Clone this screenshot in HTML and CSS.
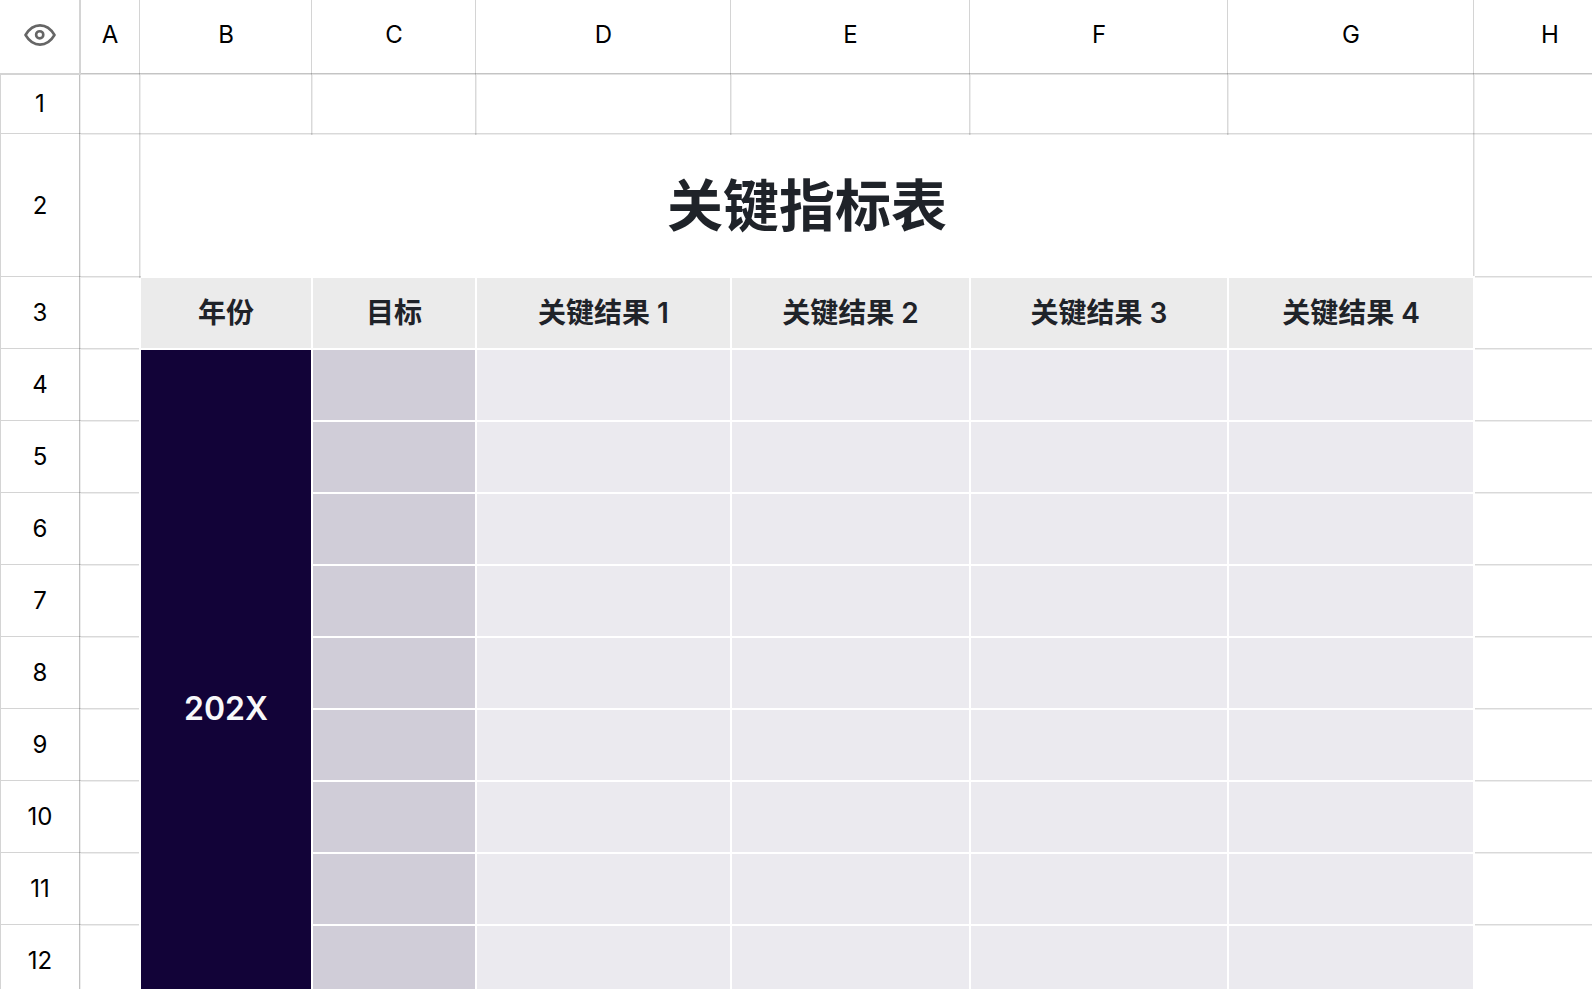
FILE: index.html
```html
<!DOCTYPE html>
<html lang="zh-CN">
<head>
    <meta charset="UTF-8">
    <meta name="viewport" content="width=device-width, initial-scale=1.0">
    <title>关键指标表</title>
    <link rel="stylesheet" href="styles.css">
</head>
<body>
    <div class="sheet">
        <table class="grid">
            <colgroup>
                <col class="col-index">
                <col class="col-a">
                <col class="col-b">
                <col class="col-c">
                <col class="col-d">
                <col class="col-e">
                <col class="col-f">
                <col class="col-g">
                <col class="col-h">
            </colgroup>
            <thead>
                <tr class="letters">
                    <th class="corner">
                        <button type="button" class="view-button" aria-label="视图">
                            <svg class="eye" viewBox="0 0 32 22" width="32" height="22" fill="none" stroke="currentColor" stroke-width="2.6" stroke-linejoin="round">
                                <path d="M1.5 11C5.2 4.8 10.2 1.4 16 1.4S26.8 4.8 30.5 11C26.8 17.2 21.8 20.6 16 20.6S5.2 17.2 1.5 11Z"/>
                                <circle cx="15.7" cy="10.8" r="3.6"/>
                            </svg>
                        </button>
                    </th>
                    <th scope="col">A</th>
                    <th scope="col">B</th>
                    <th scope="col">C</th>
                    <th scope="col">D</th>
                    <th scope="col">E</th>
                    <th scope="col">F</th>
                    <th scope="col">G</th>
                    <th scope="col">H</th>
                </tr>
            </thead>
            <tbody>
                <tr class="row-blank">
                    <th class="index" scope="row">1</th>
                    <td></td><td></td><td></td><td></td><td></td><td></td><td></td><td></td>
                </tr>
                <tr class="row-title">
                    <th class="index" scope="row">2</th>
                    <td></td>
                    <td class="title" colspan="6">关键指标表</td>
                    <td></td>
                </tr>
                <tr>
                    <th class="index" scope="row">3</th>
                    <td class="edge"></td>
                    <td class="heading">年份</td>
                    <td class="heading">目标</td>
                    <td class="heading">关键结果 1</td>
                    <td class="heading">关键结果 2</td>
                    <td class="heading">关键结果 3</td>
                    <td class="heading">关键结果 4</td>
                    <td></td>
                </tr>
                <tr>
                    <th class="index" scope="row">4</th>
                    <td class="edge"></td>
                    <td class="year" rowspan="10">202X</td>
                    <td class="goal"></td>
                    <td class="result"></td><td class="result"></td><td class="result"></td><td class="result"></td>
                    <td></td>
                </tr>
                <tr>
                    <th class="index" scope="row">5</th>
                    <td class="edge"></td>
                    <td class="goal"></td>
                    <td class="result"></td><td class="result"></td><td class="result"></td><td class="result"></td>
                    <td></td>
                </tr>
                <tr>
                    <th class="index" scope="row">6</th>
                    <td class="edge"></td>
                    <td class="goal"></td>
                    <td class="result"></td><td class="result"></td><td class="result"></td><td class="result"></td>
                    <td></td>
                </tr>
                <tr>
                    <th class="index" scope="row">7</th>
                    <td class="edge"></td>
                    <td class="goal"></td>
                    <td class="result"></td><td class="result"></td><td class="result"></td><td class="result"></td>
                    <td></td>
                </tr>
                <tr>
                    <th class="index" scope="row">8</th>
                    <td class="edge"></td>
                    <td class="goal"></td>
                    <td class="result"></td><td class="result"></td><td class="result"></td><td class="result"></td>
                    <td></td>
                </tr>
                <tr>
                    <th class="index" scope="row">9</th>
                    <td class="edge"></td>
                    <td class="goal"></td>
                    <td class="result"></td><td class="result"></td><td class="result"></td><td class="result"></td>
                    <td></td>
                </tr>
                <tr>
                    <th class="index" scope="row">10</th>
                    <td class="edge"></td>
                    <td class="goal"></td>
                    <td class="result"></td><td class="result"></td><td class="result"></td><td class="result"></td>
                    <td></td>
                </tr>
                <tr>
                    <th class="index" scope="row">11</th>
                    <td class="edge"></td>
                    <td class="goal"></td>
                    <td class="result"></td><td class="result"></td><td class="result"></td><td class="result"></td>
                    <td></td>
                </tr>
                <tr>
                    <th class="index" scope="row">12</th>
                    <td class="edge"></td>
                    <td class="goal"></td>
                    <td class="result"></td><td class="result"></td><td class="result"></td><td class="result"></td>
                    <td></td>
                </tr>
                <tr>
                    <th class="index" scope="row"></th>
                    <td class="edge"></td>
                    <td class="goal"></td>
                    <td class="result"></td><td class="result"></td><td class="result"></td><td class="result"></td>
                    <td></td>
                </tr>
            </tbody>
        </table>
    </div>
</body>
</html>
```
FILE: styles.css
```css
:root {
    --line-right: linear-gradient(to right, rgba(0, 0, 0, 0.15) 1px, rgba(0, 0, 0, 0.07) 1px) right / 2px 100% no-repeat;
    --line-bottom: linear-gradient(to bottom, rgba(0, 0, 0, 0.15) 1px, rgba(0, 0, 0, 0.07) 1px) bottom / 100% 2px no-repeat;
}

* {
    box-sizing: border-box;
}

body {
    margin: 0;
    background-color: #fff;
    color: #000;
    font-family: Inter, "Noto Sans CJK SC", sans-serif;
    font-size: 24px;
    line-height: 32px;
}

/* Scrolling viewport around the grid */
.sheet {
    height: 100vh;
    overflow: auto;
    scrollbar-width: none;
}

.grid {
    width: max-content;
    table-layout: fixed;
    border-collapse: separate;
    border-spacing: 0;
}

.col-index { width: 81px; }
.col-a { width: 60px; }
.col-b { width: 172px; }
.col-c { width: 164px; }
.col-d { width: 255px; }
.col-e { width: 239px; }
.col-f { width: 258px; }
.col-g { width: 246px; }
.col-h { width: 152px; }

th,
td {
    height: 72px;
    padding: 0 2px 2px 0;
    text-align: center;
    vertical-align: middle;
    font-weight: 400;
}

td {
    background: var(--line-right), var(--line-bottom);
}

/* Column letters */
.letters th {
    height: 75px;
    padding-bottom: 6px;
    background:
        linear-gradient(to right, rgba(0, 0, 0, 0.17) 1px, transparent 1px) right / 2px 100% no-repeat,
        linear-gradient(to bottom, rgba(0, 0, 0, 0.23) 1px, rgba(0, 0, 0, 0.11) 1px) bottom / 100% 2px no-repeat;
}

.letters .corner {
    padding: 0 0 4px;
    border-right: 2px solid #d4d4d4;
    border-bottom: 2px solid #d4d4d4;
    background: none;
}

.view-button {
    display: block;
    margin: 0 auto;
    padding: 0;
    border: 0;
    background: none;
    color: #666;
    cursor: pointer;
}

.eye {
    display: block;
}

/* Row numbers */
.index {
    border-left: 1px solid #d4d4d4;
    background:
        linear-gradient(to right, rgba(0, 0, 0, 0.24) 1px, rgba(0, 0, 0, 0.07) 1px) right / 2px 100% no-repeat,
        linear-gradient(to bottom, rgba(0, 0, 0, 0.17) 1px, transparent 1px) bottom / 100% 2px no-repeat;
}

.row-blank th,
.row-blank td {
    height: 60px;
}

.row-title th,
.row-title td {
    height: 143px;
}

/* Table content */
.edge {
    border-right: 2px solid #fff;
    background: var(--line-bottom);
}

.title,
.heading,
.year,
.goal,
.result {
    padding: 0;
    border-right: 2px solid #fff;
    border-bottom: 2px solid #fff;
    background: none;
}

.title {
    padding-right: 2px;
    border-right: 0;
    background: var(--line-right);
    color: #1f2329;
    font-size: 56px;
    font-weight: 600;
    line-height: 80px;
}

.heading {
    background-color: #ebebeb;
    color: #1f2329;
    font-size: 28px;
    font-weight: 600;
}

.year {
    background-color: #120338;
    color: #f8f8fa;
    font-size: 32px;
    font-weight: 600;
}

.goal {
    background-color: #d0cdd8;
}

.result {
    background-color: #ebeaef;
}
```
